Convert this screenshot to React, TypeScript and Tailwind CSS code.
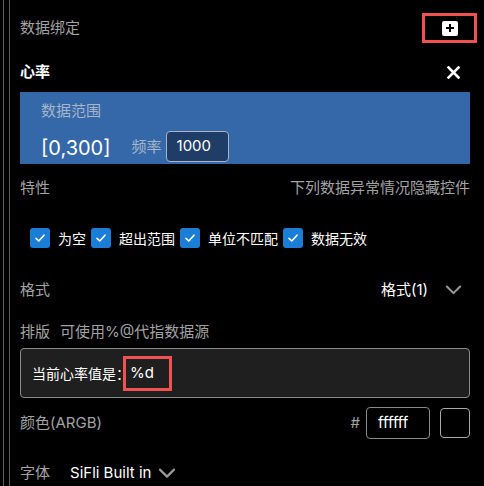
import React from "react";

const Check = () => (
  <span className="flex h-[20px] w-[20px] shrink-0 items-center justify-center rounded-[3px] bg-[#1a7ed6]">
    <svg width="14" height="14" viewBox="0 0 14 14" fill="none">
      <path d="M3 7.3 L5.8 10 L11 4.2" stroke="white" strokeWidth="1.6" strokeLinecap="round" strokeLinejoin="round" />
    </svg>
  </span>
);

const Chevron = ({ w = 16, color = "#9a9a9a" }: { w?: number; color?: string }) => (
  <svg width={w} height={w * 0.6} viewBox="0 0 16 10" fill="none">
    <path d="M1.5 1.5 L8 8 L14.5 1.5" stroke={color} strokeWidth="2" strokeLinecap="round" strokeLinejoin="round" />
  </svg>
);

export default function App() {
  const font = { fontFamily: '"Inter", "Noto Sans CJK SC", sans-serif' };
  return (
    <div className="flex h-[486px] w-[484px] overflow-hidden bg-black" style={font}>
      <div className="w-[3px] shrink-0" />
      <div className="w-[1px] shrink-0 bg-[#5a5a5a]" />
      <div className="w-[5px] shrink-0" />
      <div className="w-[1px] shrink-0 bg-[#5a5a5a]" />
      <div className="flex w-[460px] shrink-0 flex-col pl-[10px]">
        {/* Row 1 */}
        <div className="flex h-[56px] shrink-0 items-center justify-between">
          <span className="text-[15px] text-[#a3a3a3]">数据绑定</span>
          <div className="mr-[-7px] flex h-[30px] w-[55px] items-center justify-center border-[3px] border-[#f05252]">
            <span className="flex h-[15px] w-[16px] items-center justify-center rounded-[2px] bg-white">
              <svg width="10" height="10" viewBox="0 0 10 10">
                <path d="M5 1 V9 M1 5 H9" stroke="black" strokeWidth="2" />
              </svg>
            </span>
          </div>
        </div>
        {/* Row 2 */}
        <div className="flex h-[32px] shrink-0 items-center justify-between">
          <span className="text-[15px] font-semibold text-white">心率</span>
          <svg className="mr-[10px]" width="13" height="13" viewBox="0 0 13 13">
            <path d="M1.5 1.5 L11.5 11.5 M11.5 1.5 L1.5 11.5" stroke="white" strokeWidth="2.6" strokeLinecap="square" />
          </svg>
        </div>
        {/* Blue panel */}
        <div className="mt-[4px] flex h-[72px] w-[450px] shrink-0 flex-col bg-[#3568a8] pl-[21px]">
          <span className="mt-[8px] text-[15px] leading-[22px] text-[#a6b5c9]">数据范围</span>
          <div className="mt-[8px] flex items-center">
            <span className="mt-[4px] text-[20px] leading-[28px] text-white">[0,300]</span>
            <span className="ml-[21px] mt-[2px] text-[15px] text-[#a6b5c9]">频率</span>
            <div className="ml-[4px] mt-[1px] flex h-[31px] w-[63px] items-center rounded-[4px] border border-[#aab4c4] bg-[#1f3d66] pl-[10px] text-[15px] text-white">
              1000
            </div>
          </div>
        </div>
        {/* 特性 */}
        <div className="flex h-[48px] w-[450px] shrink-0 items-center justify-between">
          <span className="text-[15px] text-[#a3a3a3]">特性</span>
          <span className="text-[15px] text-[#a3a3a3]">下列数据异常情况隐藏控件</span>
        </div>
        {/* Checkboxes */}
        <div className="flex h-[52px] shrink-0 items-center pl-[10px] text-[14px] text-white">
          <Check />
          <span className="ml-[8px] mr-[5px]">为空</span>
          <Check />
          <span className="ml-[8px] mr-[5px]">超出范围</span>
          <Check />
          <span className="ml-[8px] mr-[5px]">单位不匹配</span>
          <Check />
          <span className="ml-[8px]">数据无效</span>
        </div>
        {/* 格式 */}
        <div className="flex h-[52px] w-[450px] shrink-0 items-center justify-between">
          <span className="text-[15px] text-[#a3a3a3]">格式</span>
          <div className="flex items-center">
            <span className="text-[15px] text-white">格式(1)</span>
            <span className="ml-[17px] mr-[8px] flex items-center">
              <Chevron w={17} />
            </span>
          </div>
        </div>
        {/* 排版 */}
        <div className="flex h-[32px] shrink-0 items-center text-[15px] text-[#a3a3a3]">
          <span>排版</span>
          <span className="ml-[10px]">可使用%@代指数据源</span>
        </div>
        {/* Text box */}
        <div className="flex h-[50px] w-[450px] shrink-0 items-center rounded-[4px] border border-[#8a8a8a] bg-[#1f1f1f] pl-[11px] text-[14px] text-white">
          <span>当前心率值是：</span>
          <span className="ml-[-7px] flex h-[35px] w-[49px] items-center border-[3px] border-[#f05252] pl-[4px] text-[15px]">%d</span>
        </div>
        {/* Color */}
        <div className="flex h-[50px] w-[450px] shrink-0 items-center justify-between">
          <span className="text-[15px] text-[#a3a3a3]">颜色(ARGB)</span>
          <div className="flex items-center">
            <span className="text-[15px] text-[#a3a3a3]">#</span>
            <div className="ml-[6px] flex h-[32px] w-[64px] items-center rounded-[4px] border border-[#8a8a8a] pl-[11px] text-[15px] text-white">
              ffffff
            </div>
            <div className="ml-[10px] h-[30px] w-[30px] rounded-[4px] border border-[#aaaaaa] bg-black" />
          </div>
        </div>
        {/* Font */}
        <div className="flex h-[50px] shrink-0 items-center">
          <span className="text-[15px] text-[#a3a3a3]">字体</span>
          <span className="ml-[20px] text-[15px] text-white">SiFli Built in</span>
          <span className="ml-[7px] flex items-center">
            <Chevron w={18} />
          </span>
        </div>
      </div>
    </div>
  );
}
